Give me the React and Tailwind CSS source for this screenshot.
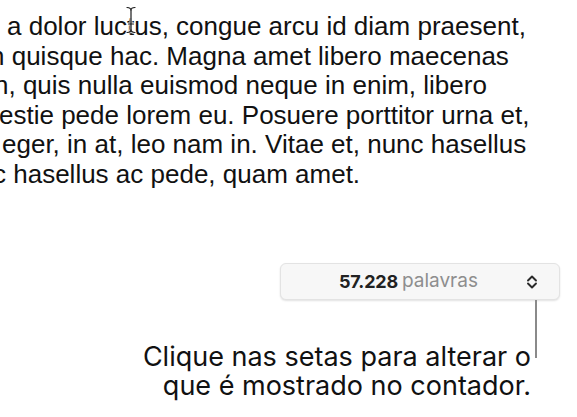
import React from "react";

const lines = [
  { text: "a dolor luctus, congue arcu id diam praesent,", cls: "ml-[7px]" },
  { text: "n quisque hac. Magna amet libero maecenas", cls: "ml-[-10px]" },
  { text: "n, quis nulla euismod neque in enim, libero", cls: "ml-[-6px]" },
  { text: "estie pede lorem eu. Posuere porttitor urna et,", cls: "ml-[-1px]" },
  { text: "eger, in at, leo nam in. Vitae et, nunc hasellus", cls: "ml-[2px]" },
  { text: "c hasellus ac pede, quam amet.", cls: "ml-[-7px]" },
];

function IBeam() {
  return (
    <svg
      className="absolute left-[125px] top-[6px]"
      width="12"
      height="28"
      viewBox="0 0 12 28"
      fill="none"
    >
      <g stroke="#ffffff" strokeWidth="3" strokeLinecap="round" opacity="0.8">
        <path d="M2 1.5 Q6 1.5 6 4.5 Q6 1.5 10 1.5" />
        <path d="M6 4.5 V23.5" />
        <path d="M2 26.5 Q6 26.5 6 23.5 Q6 26.5 10 26.5" />
        <path d="M3.5 18 H8.5" />
      </g>
      <g stroke="#1a1a1a" strokeWidth="1.2" strokeLinecap="round">
        <path d="M2 1.5 Q6 1.5 6 4.5 Q6 1.5 10 1.5" />
        <path d="M6 4.5 V23.5" />
        <path d="M2 26.5 Q6 26.5 6 23.5 Q6 26.5 10 26.5" />
        <path d="M3.5 18 H8.5" />
      </g>
    </svg>
  );
}

function Chevrons() {
  return (
    <svg width="12" height="16" viewBox="0 0 12 16" fill="none">
      <path
        d="M2 6.5 L6 2.5 L10 6.5"
        stroke="#2a2a2a"
        strokeWidth="1.9"
        strokeLinecap="round"
        strokeLinejoin="round"
      />
      <path
        d="M2 9.5 L6 13.5 L10 9.5"
        stroke="#2a2a2a"
        strokeWidth="1.9"
        strokeLinecap="round"
        strokeLinejoin="round"
      />
    </svg>
  );
}

export default function App() {
  return (
    <div className="w-[577px] h-[417px] bg-white overflow-hidden">
      <div
        className="relative pt-[12px] text-[26px] leading-[29.5px] text-[#111]"
        style={{ fontFamily: '"Liberation Sans", Arial, sans-serif' }}
      >
        {lines.map((l, i) => (
          <div key={i} className={`whitespace-nowrap ${l.cls}`}>
            {l.text}
          </div>
        ))}
        <IBeam />
      </div>

      <div style={{ fontFamily: "Inter, sans-serif" }}>
        <div className="mt-[74px] flex justify-end pr-[17px]">
          <div className="w-[280px] h-[37px] flex items-center pl-[58px] pr-[21px] bg-[#f7f7f7] border border-[#e3e3e3] rounded-[6px] shadow-[0_1px_2px_rgba(0,0,0,0.12)]">
            <span className="text-[18px] font-bold tracking-[-0.2px] text-[#222]">
              57.228
            </span>
            <span className="ml-[4px] text-[19px] text-[#8e8e8e]">palavras</span>
            <span className="ml-auto flex">
              <Chevrons />
            </span>
          </div>
        </div>

        <div className="flex justify-end items-start pr-[40px]">
          <div className="pt-[42px] text-right text-[27px] leading-[29px] text-[#111] whitespace-nowrap">
            <div>Clique nas setas para alterar o</div>
            <div>que é mostrado no contador.</div>
          </div>
          <div className="ml-[4px] w-[2px] h-[58px] bg-[#8a8a8a]" />
        </div>
      </div>
    </div>
  );
}
